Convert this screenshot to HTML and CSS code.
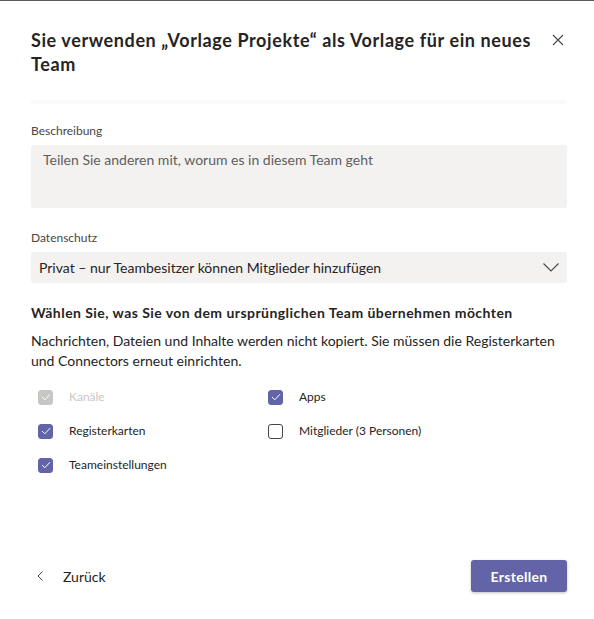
FILE: index.html
```html
<!DOCTYPE html>
<html lang="de">
<head>
<meta charset="utf-8">
<link rel="stylesheet" href="styles.css">
</head>
<body>
<div class="dialog">
  <header class="head">
    <h1 class="title">Sie verwenden „Vorlage Projekte“ als Vorlage für ein neues Team</h1>
    <button class="close" aria-label="Schließen">
      <svg width="12" height="12" viewBox="0 0 12 12"><path d="M1 1L11 11M11 1L1 11" stroke="#484644" stroke-width="1.1" fill="none"/></svg>
    </button>
  </header>
  <div class="strip"></div>
  <label class="label">Beschreibung</label>
  <div class="textarea">Teilen Sie anderen mit, worum es in diesem Team geht</div>
  <label class="label label2">Datenschutz</label>
  <div class="select">
    <span>Privat – nur Teambesitzer können Mitglieder hinzufügen</span>
    <svg width="16" height="9" viewBox="0 0 16 9"><path d="M0.5 0.5L8 8L15.5 0.5" stroke="#484644" stroke-width="1.1" fill="none"/></svg>
  </div>
  <h2 class="sub">Wählen Sie, was Sie von dem ursprünglichen Team übernehmen möchten</h2>
  <p class="desc">Nachrichten, Dateien und Inhalte werden nicht kopiert. Sie müssen die Registerkarten und Connectors erneut einrichten.</p>
  <div class="checks">
    <div class="check disabled"><span class="box on"><svg width="10" height="8" viewBox="0 0 10 8"><path d="M1 4L3.8 6.8L9 1.2" stroke="#fff" stroke-width="1" fill="none"/></svg></span>Kanäle</div>
    <div class="check"><span class="box on"><svg width="10" height="8" viewBox="0 0 10 8"><path d="M1 4L3.8 6.8L9 1.2" stroke="#fff" stroke-width="1" fill="none"/></svg></span>Apps</div>
    <div class="check"><span class="box on"><svg width="10" height="8" viewBox="0 0 10 8"><path d="M1 4L3.8 6.8L9 1.2" stroke="#fff" stroke-width="1" fill="none"/></svg></span>Registerkarten</div>
    <div class="check"><span class="box"></span>Mitglieder (3 Personen)</div>
    <div class="check"><span class="box on"><svg width="10" height="8" viewBox="0 0 10 8"><path d="M1 4L3.8 6.8L9 1.2" stroke="#fff" stroke-width="1" fill="none"/></svg></span>Teameinstellungen</div>
  </div>
  <footer class="foot">
    <button class="back"><svg width="6" height="10" viewBox="0 0 6 10"><path d="M5.5 0.5L1 5L5.5 9.5" stroke="#484644" stroke-width="1" fill="none"/></svg><span>Zurück</span></button>
    <button class="primary">Erstellen</button>
  </footer>
</div>
</body>
</html>
```
FILE: styles.css
```css
* { box-sizing: border-box; }
html, body { margin: 0; padding: 0; background: #fff; }
body {
  font-family: "Lato", "Noto Sans", sans-serif;
  color: #252423;
  border-top: 1px solid #5a5a5a;
  width: 594px;
  height: 619px;
  overflow: hidden;
}
.dialog {
  padding: 27px 27px 0 31px;
  display: flex;
  flex-direction: column;
  height: 618px;
}
.head {
  display: flex;
  align-items: flex-start;
  gap: 20px;
}
.title {
  margin: 0;
  font-size: 18px;
  font-weight: 700;
  line-height: 24px;
  letter-spacing: 0.6px;
  flex: 1;
  color: #252423;
}
.close {
  border: 0;
  background: none;
  padding: 0;
  margin-top: 6px;
  margin-right: 3px;
  width: 12px;
  height: 12px;
  display: flex;
}
.strip {
  height: 4px;
  background: #fafafa;
  margin-top: 24px;
  width: 536px;
}
.label {
  font-size: 12px;
  line-height: 16px;
  color: #484644;
  margin-top: 19px;
}
.label2 { margin-top: 22px; }
.textarea {
  margin-top: 6px;
  width: 536px;
  height: 63px;
  background: #f3f2f1;
  border-radius: 3px;
  padding: 5px 12px;
  font-size: 14px;
  line-height: 20px;
  color: #605e5c;
}
.select {
  margin-top: 6px;
  width: 536px;
  height: 31px;
  background: #f3f2f1;
  border-radius: 3px;
  padding: 0 8px 0 8px;
  display: flex;
  align-items: center;
  justify-content: space-between;
  font-size: 14px;
  color: #252423;
}
.sub {
  margin: 20px 0 0;
  font-size: 14px;
  font-weight: 700;
  line-height: 20px;
  letter-spacing: 0.45px;
  color: #252423;
}
.desc {
  margin: 8px 0 0;
  font-size: 14px;
  line-height: 20px;
  color: #252423;
  width: 536px;
}
.checks {
  margin-top: 16px;
  display: grid;
  grid-template-columns: 230px 1fr;
  row-gap: 14px;
  padding-left: 7px;
}
.check {
  display: flex;
  align-items: center;
  gap: 16px;
  font-size: 12px;
  line-height: 20px;
  color: #252423;
}
.box {
  width: 15px;
  height: 15px;
  border: 1px solid #484644;
  border-radius: 3px;
  display: flex;
  align-items: center;
  justify-content: center;
}
.box.on { background: #6264a7; border-color: #6264a7; }
.check.disabled { color: #c8c6c4; }
.check.disabled .box { background: #c8c6c4; border-color: #c8c6c4; }
.foot {
  margin-top: auto;
  margin-bottom: 27px;
  display: flex;
  align-items: center;
  justify-content: space-between;
  width: 536px;
}
.back {
  border: 0;
  background: none;
  padding: 0 0 0 6px;
  display: flex;
  align-items: center;
  gap: 20px;
  font-family: inherit;
  font-size: 14px;
  color: #252423;
}
.primary {
  border: 0;
  width: 96px;
  height: 32px;
  border-radius: 3px;
  background: #6264a7;
  color: #fff;
  font-family: inherit;
  font-size: 14px;
  font-weight: 700;
  letter-spacing: 0.3px;
  box-shadow: 0 1px 3px rgba(0,0,0,0.25);
}
```
